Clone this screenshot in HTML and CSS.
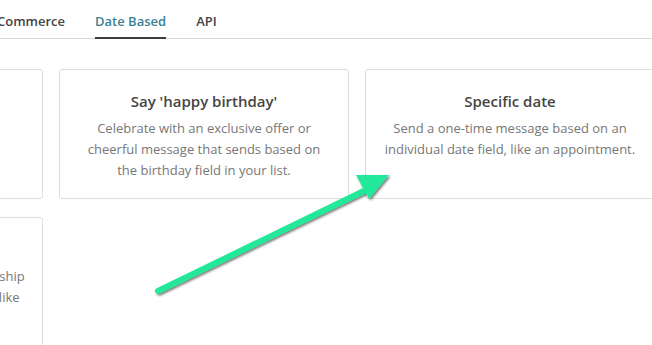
FILE: index.html
```html
<!DOCTYPE html>
<html>
<head>
<meta charset="utf-8">
<link rel="stylesheet" href="styles.css">
</head>
<body>
<div class="page">
  <nav class="tabs">
    <a class="tab">Commerce</a>
    <a class="tab active">Date Based</a>
    <a class="tab">API</a>
  </nav>
  <div class="cards">
    <div class="card">
      <h3 class="card-title">Recurring date</h3>
      <p class="card-desc">Send a message each year<br>on a date, like a renewal.</p>
    </div>
    <div class="card">
      <h3 class="card-title">Say 'happy birthday'</h3>
      <p class="card-desc">Celebrate with an exclusive offer or cheerful message that sends based on the birthday field in your list.</p>
    </div>
    <div class="card">
      <h3 class="card-title">Specific date</h3>
      <p class="card-desc">Send a one-time message based on an individual date field, like an appointment.</p>
    </div>
    <div class="card">
      <h3 class="card-title">Anniversary</h3>
      <p class="card-desc">Send a yearly note to mark a membership<br>anniversaries or renewal date fields, like<br>a signup date.</p>
    </div>
  </div>
  <svg class="arrow" width="652" height="345" viewBox="0 0 652 345">
    <defs>
      <filter id="sh" x="-20%" y="-20%" width="140%" height="140%">
        <feDropShadow dx="1.5" dy="1.5" stdDeviation="1.2" flood-color="#000" flood-opacity="0.55"/>
      </filter>
    </defs>
    <g filter="url(#sh)">
      <line x1="158" y1="291" x2="372" y2="187" stroke="#22e89a" stroke-width="6" stroke-linecap="round"/>
      <polygon points="356,175 389,175 369,199" fill="#22e89a"/>
    </g>
  </svg>
</div>
</body>
</html>
```

FILE: styles.css
```css
html, body {
  margin: 0;
  padding: 0;
  background: #fff;
}

.page {
  position: relative;
  width: 652px;
  height: 345px;
  overflow: hidden;
  font-family: "Open Sans", "Liberation Sans", sans-serif;
}

.tabs {
  display: flex;
  gap: 30px;
  height: 38px;
  border-bottom: 1px solid #d9d9d9;
  margin-left: -3px;
  align-items: flex-end;
}

.tab {
  font-size: 13px;
  font-weight: 600;
  color: #444;
  line-height: 20px;
  padding-bottom: 6px;
  border-bottom: 2px solid transparent;
  margin-bottom: -1px;
}

.tab.active {
  color: #3b8196;
  border-bottom-color: #3d3d3d;
}

.cards {
  display: grid;
  grid-template-columns: repeat(3, 290px);
  gap: 18px 16px;
  margin-top: 30px;
  margin-left: -247px;
}

.card {
  box-sizing: border-box;
  height: 130px;
  border: 1px solid #dcdcdc;
  border-radius: 3px;
  padding: 21px 16.5px 0;
  text-align: center;
}

.card-title {
  margin: 0;
  font-size: 15px;
  font-weight: 600;
  line-height: 20px;
  color: #454545;
}

.card-desc {
  margin: 7px 0 0;
  font-size: 13px;
  line-height: 21px;
  color: #777;
}

.arrow {
  position: absolute;
  left: 0;
  top: 0;
  pointer-events: none;
}
```
